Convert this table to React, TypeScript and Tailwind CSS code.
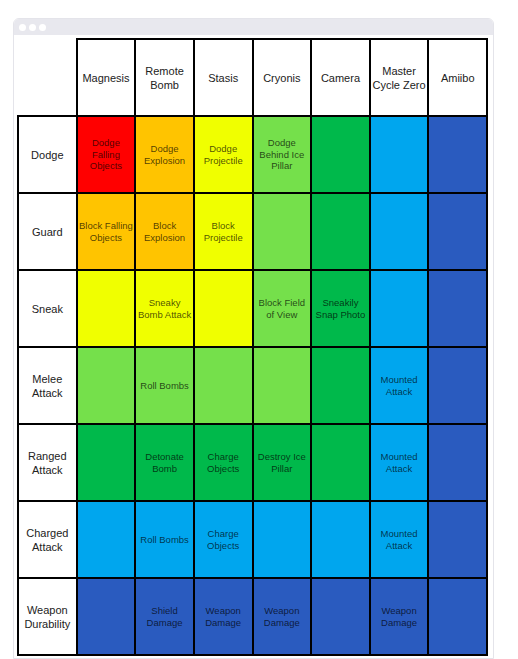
import React from 'react'

type Tone = 'r' | 'o' | 'y' | 'lg' | 'g' | 'lb' | 'b'

const tone: Record<Tone, string> = {
  r: 'bg-[#ff0000]',
  o: 'bg-[#ffc400]',
  y: 'bg-[#f0ff00]',
  lg: 'bg-[#75e04b]',
  g: 'bg-[#00b94b]',
  lb: 'bg-[#00a6ee]',
  b: 'bg-[#2a5bbf]',
}

const columns = ['Magnesis', 'Remote Bomb', 'Stasis', 'Cryonis', 'Camera', 'Master Cycle Zero', 'Amiibo']

const rows: { label: string; cells: [Tone, string][] }[] = [
  {
    label: 'Dodge',
    cells: [
      ['r', 'Dodge Falling Objects'],
      ['o', 'Dodge Explosion'],
      ['y', 'Dodge Projectile'],
      ['lg', 'Dodge Behind Ice Pillar'],
      ['g', ''],
      ['lb', ''],
      ['b', ''],
    ],
  },
  {
    label: 'Guard',
    cells: [
      ['o', 'Block Falling Objects'],
      ['o', 'Block Explosion'],
      ['y', 'Block Projectile'],
      ['lg', ''],
      ['g', ''],
      ['lb', ''],
      ['b', ''],
    ],
  },
  {
    label: 'Sneak',
    cells: [
      ['y', ''],
      ['y', 'Sneaky Bomb Attack'],
      ['y', ''],
      ['lg', 'Block Field of View'],
      ['g', 'Sneakily Snap Photo'],
      ['lb', ''],
      ['b', ''],
    ],
  },
  {
    label: 'Melee Attack',
    cells: [
      ['lg', ''],
      ['lg', 'Roll Bombs'],
      ['lg', ''],
      ['lg', ''],
      ['g', ''],
      ['lb', 'Mounted Attack'],
      ['b', ''],
    ],
  },
  {
    label: 'Ranged Attack',
    cells: [
      ['g', ''],
      ['g', 'Detonate Bomb'],
      ['g', 'Charge Objects'],
      ['g', 'Destroy Ice Pillar'],
      ['g', ''],
      ['lb', 'Mounted Attack'],
      ['b', ''],
    ],
  },
  {
    label: 'Charged Attack',
    cells: [
      ['lb', ''],
      ['lb', 'Roll Bombs'],
      ['lb', 'Charge Objects'],
      ['lb', ''],
      ['lb', ''],
      ['lb', 'Mounted Attack'],
      ['b', ''],
    ],
  },
  {
    label: 'Weapon Durability',
    cells: [
      ['b', ''],
      ['b', 'Shield Damage'],
      ['b', 'Weapon Damage'],
      ['b', 'Weapon Damage'],
      ['b', ''],
      ['b', 'Weapon Damage'],
      ['b', ''],
    ],
  },
]

export default function App() {
  return (
    <div className="min-h-[659px] bg-white pt-[18px] pl-[13px] font-['Liberation_Sans',Arial,sans-serif]">
      <div className="w-[481px] overflow-hidden rounded-t-[6px] border border-[#e4e4ea] bg-white">
        <div className="flex h-[16px] items-center gap-[3px] bg-[#e8e8ee] px-[5px]">
          <span className="h-[7px] w-[7px] rounded-full bg-white" />
          <span className="h-[7px] w-[7px] rounded-full bg-white" />
          <span className="h-[7px] w-[7px] rounded-full bg-white" />
        </div>
        <div className="px-[3px] pt-[3px] pb-[2px]">
          <table className="w-[471px] table-fixed border-collapse">
            <thead>
              <tr className="h-[77px]">
                <th className="border-0 bg-white" />
                {columns.map((c) => (
                  <th
                    key={c}
                    className="border-2 border-black bg-white px-[1px] text-center align-middle text-[11px] leading-[14px] font-normal text-[#222]"
                  >
                    {c}
                  </th>
                ))}
              </tr>
            </thead>
            <tbody>
              {rows.map((r) => (
                <tr key={r.label} className="h-[77px]">
                  <td className="border-2 border-black bg-white px-[1px] text-center align-middle text-[11px] leading-[14px] text-[#222]">
                    {r.label}
                  </td>
                  {r.cells.map(([t, text], i) => (
                    <td
                      key={i}
                      className={`border-2 border-black px-[1px] text-center align-middle text-[9.5px] leading-[11.5px] text-black/70 ${tone[t]}`}
                    >
                      {text}
                    </td>
                  ))}
                </tr>
              ))}
            </tbody>
          </table>
        </div>
      </div>
    </div>
  )
}
